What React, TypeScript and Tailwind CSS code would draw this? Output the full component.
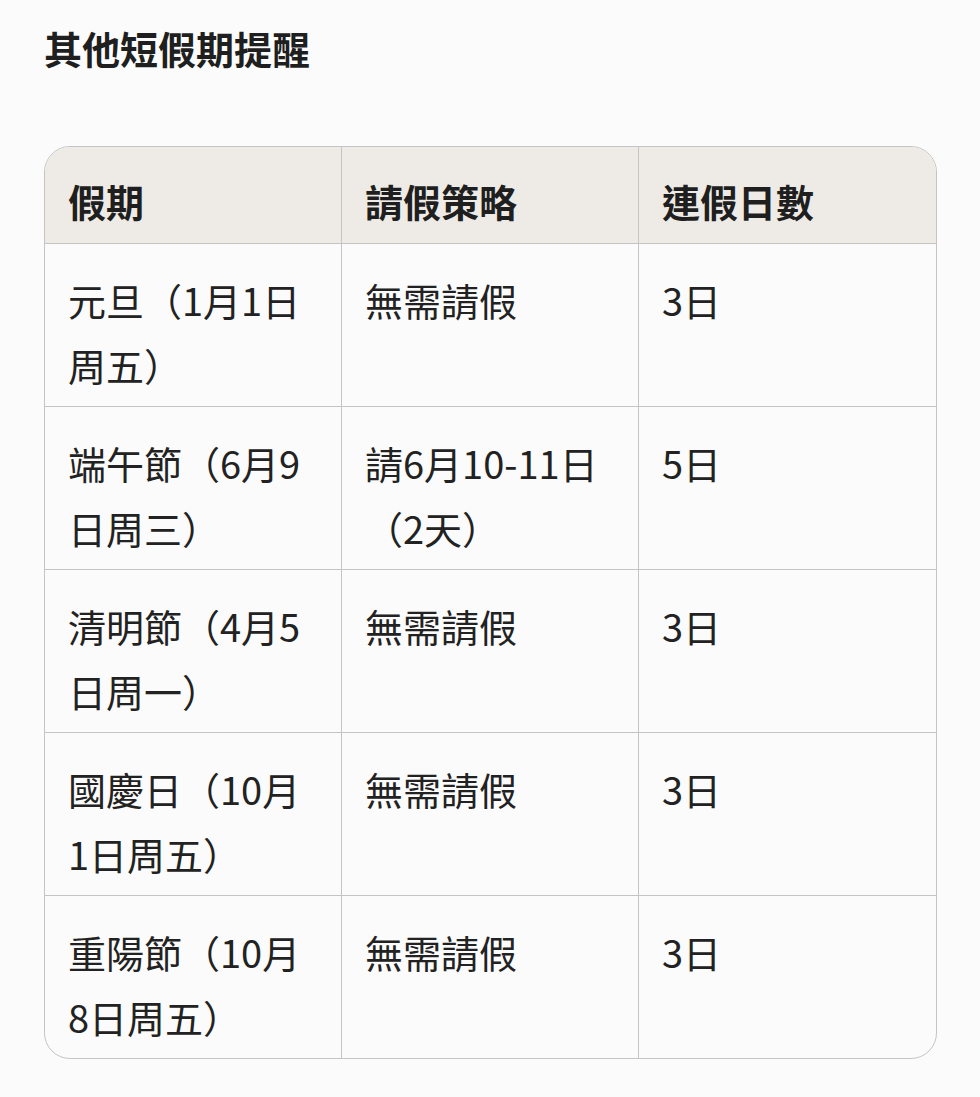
import React from "react";

const rows: [string, string, string][] = [
  ["元旦（1月1日周五）", "無需請假", "3日"],
  ["端午節（6月9日周三）", "請6月10-11日（2天）", "5日"],
  ["清明節（4月5日周一）", "無需請假", "3日"],
  ["國慶日（10月1日周五）", "無需請假", "3日"],
  ["重陽節（10月8日周五）", "無需請假", "3日"],
];

const font = { fontFamily: '"Noto Sans CJK TC", "Noto Sans", sans-serif' };

export default function App() {
  return (
    <div
      className="min-h-[1097px] w-[980px] bg-[#fbfbfb] text-[#1f1f1f] px-[44px] pt-[23px]"
      style={font}
    >
      <h2 className="text-[38px] leading-[50px] font-bold">其他短假期提醒</h2>
      <div className="mt-[73px] w-[893px] rounded-[26px] border border-[#c4c4c4] overflow-hidden">
        <div className="grid grid-cols-3 bg-[#eeebe6] border-b border-[#c4c4c4]">
          {["假期", "請假策略", "連假日數"].map((h, i) => (
            <div
              key={h}
              className={`pl-[23px] pr-[20px] pt-[21px] pb-[10px] text-[38px] leading-[65px] font-bold ${i < 2 ? "border-r border-[#c4c4c4]" : ""}`}
            >
              {h}
            </div>
          ))}
        </div>
        {rows.map((r, ri) => (
          <div
            key={ri}
            className={`grid grid-cols-3 ${ri < rows.length - 1 ? "border-b border-[#c4c4c4]" : ""}`}
          >
            {r.map((c, ci) => (
              <div
                key={ci}
                className={`pl-[23px] pr-[20px] pt-[23px] pb-[9px] text-[38px] leading-[65px] text-[#222] ${ci < 2 ? "border-r border-[#c4c4c4]" : ""}`}
              >
                {c}
              </div>
            ))}
          </div>
        ))}
      </div>
    </div>
  );
}
